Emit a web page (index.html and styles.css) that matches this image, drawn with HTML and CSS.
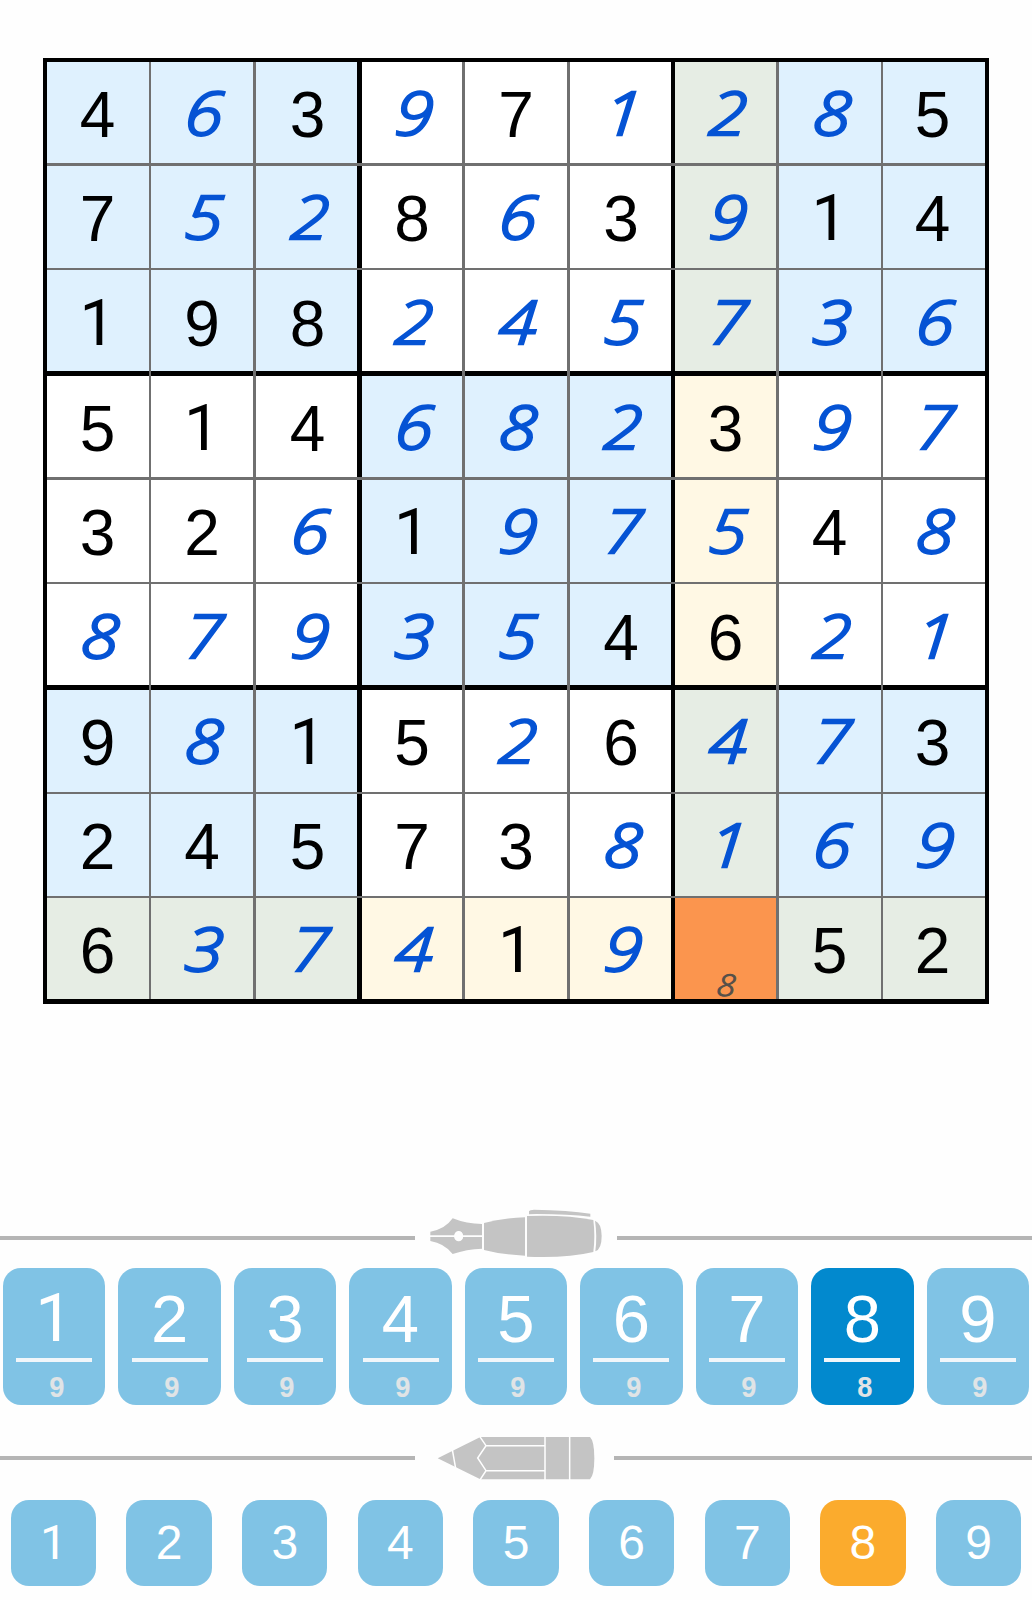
FILE: index.html
```
<!DOCTYPE html>
<html lang="en">
<head>
<meta charset="utf-8">
<title>Sudoku</title>
<link rel="stylesheet" href="styles.css">
</head>
<body>
<main class="game">
  <section class="board">
    <div class="cells">
      <b class="c box">4</b><i class="c box"><s>6</s></i><b class="c box">3</b><i class="c"><s>9</s></i><b class="c">7</b><i class="c"><s>1</s></i><i class="c peer"><s>2</s></i><i class="c box"><s>8</s></i><b class="c box">5</b>
      <b class="c box">7</b><i class="c box"><s>5</s></i><i class="c box"><s>2</s></i><b class="c">8</b><i class="c"><s>6</s></i><b class="c">3</b><i class="c peer"><s>9</s></i><b class="c one box">1</b><b class="c box">4</b>
      <b class="c one box">1</b><b class="c box">9</b><b class="c box">8</b><i class="c"><s>2</s></i><i class="c"><s>4</s></i><i class="c"><s>5</s></i><i class="c peer"><s>7</s></i><i class="c box"><s>3</s></i><i class="c box"><s>6</s></i>
      <b class="c">5</b><b class="c one">1</b><b class="c">4</b><i class="c box"><s>6</s></i><i class="c box"><s>8</s></i><i class="c box"><s>2</s></i><b class="c line-peer">3</b><i class="c"><s>9</s></i><i class="c"><s>7</s></i>
      <b class="c">3</b><b class="c">2</b><i class="c"><s>6</s></i><b class="c one box">1</b><i class="c box"><s>9</s></i><i class="c box"><s>7</s></i><i class="c line-peer"><s>5</s></i><b class="c">4</b><i class="c"><s>8</s></i>
      <i class="c"><s>8</s></i><i class="c"><s>7</s></i><i class="c"><s>9</s></i><i class="c box"><s>3</s></i><i class="c box"><s>5</s></i><b class="c box">4</b><b class="c line-peer">6</b><i class="c"><s>2</s></i><i class="c"><s>1</s></i>
      <b class="c box">9</b><i class="c box"><s>8</s></i><b class="c one box">1</b><b class="c">5</b><i class="c"><s>2</s></i><b class="c">6</b><i class="c peer"><s>4</s></i><i class="c box"><s>7</s></i><b class="c box">3</b>
      <b class="c box">2</b><b class="c box">4</b><b class="c box">5</b><b class="c">7</b><b class="c">3</b><i class="c"><s>8</s></i><i class="c peer"><s>1</s></i><i class="c box"><s>6</s></i><i class="c box"><s>9</s></i>
      <b class="c peer last">6</b><i class="c peer last"><s>3</s></i><i class="c peer last"><s>7</s></i><i class="c line-peer last"><s>4</s></i><b class="c one line-peer last">1</b><i class="c line-peer last"><s>9</s></i><i class="c selected"><s>8</s></i><b class="c peer last">5</b><b class="c peer last">2</b>
    </div>
    <div class="rules">
      <span class="v thick c3"></span><span class="v thick c6"></span>
      <span class="h thick r3"></span><span class="h thick r6"></span>
      <span class="v c1"></span><span class="v wide c2"></span><span class="v wide c4"></span><span class="v wide c5"></span><span class="v wide c7"></span><span class="v c8"></span>
      <span class="h wide r1"></span><span class="h r2"></span><span class="h wide r4"></span><span class="h r5"></span><span class="h r7"></span><span class="h r8"></span>
    </div>
  </section>

  <div class="divider pen-divider">
    <svg class="pen" viewBox="15 24 606 180" aria-hidden="true">
      <g fill="#c4c4c4">
        <path d="M61 95Q105 88 128 55Q170 72 216 72V106H159A13 13 0 0 0 133 106H61Z"/>
        <path d="M61 111H133A13 13 0 0 0 159 111H216V146Q170 147 128 162Q103 130 61 123Z"/>
        <path d="M222 69Q275 54 345 52V167Q275 164 222 150Z"/>
        <path d="M351 48Q470 44 550 60Q556 108 550 156Q470 175 351 170Z"/>
        <path d="M555 62Q575 70 575 108Q575 148 556 154Q562 108 555 62Z"/>
        <path d="M357 34Q359 29 372 29Q475 30 541 41V50Q475 42 380 42L357 43Z"/>
      </g>
      <circle cx="146" cy="108.500" r="13" fill="#fefefe"/>
    </svg>
  </div>
  <div class="digits">
    <div class="digit"><span class="one">1</span><small>9</small></div>
    <div class="digit"><span>2</span><small>9</small></div>
    <div class="digit"><span>3</span><small>9</small></div>
    <div class="digit"><span>4</span><small>9</small></div>
    <div class="digit"><span>5</span><small>9</small></div>
    <div class="digit"><span>6</span><small>9</small></div>
    <div class="digit"><span>7</span><small>9</small></div>
    <div class="digit active"><span>8</span><small>8</small></div>
    <div class="digit"><span>9</span><small>9</small></div>
  </div>

  <div class="divider pencil-divider">
    <svg class="pencil" viewBox="15 18 597 162" aria-hidden="true">
      <path fill="#c4c4c4" d="M83 100L211 36H540Q553 48 553 100Q553 150 540 163H211Z"/>
      <path fill="none" stroke="#fff" stroke-width="4.5" d="M127 74L137 130M209 34L228 62L203 99L228 137L209 166M228 62H404M228 137H404M405 34V165M479 34V165"/>
    </svg>
  </div>
  <div class="notes">
    <div class="note one">1</div><div class="note">2</div><div class="note">3</div><div class="note">4</div><div class="note">5</div><div class="note">6</div><div class="note">7</div><div class="note active">8</div><div class="note">9</div>
  </div>
</main>
</body>
</html>
```

FILE: styles.css
```
* { box-sizing: border-box; }
body {
  margin: 0;
  background: #fefefe;
  font-family: "Liberation Sans", Arial, sans-serif;
}
.game {
  width: 1032px;
  height: 1600px;
  padding-top: 58px;
  display: flex;
  flex-direction: column;
  overflow: hidden;
}

/* board: cells and ruling lines are two grids stacked in one area */
.board {
  display: grid;
  width: 946px;
  margin-left: 43px;
  border: 4px solid #000;
  border-bottom-width: 5px;
}
.cells, .rules {
  grid-area: 1 / 1;
  display: grid;
  grid-template-columns: 104px 105px 106px 103px 105px 105px 104px 104px 102px;
  grid-template-rows: 104px 104px 106px 104px 104px 106px 104px 104px 101px;
}
.c {
  display: flex;
  align-items: center;
  justify-content: center;
  padding: 2px 3px 0 0;
  font-size: 64px;
  line-height: 64px;
  font-weight: 400;
  font-style: normal;
  color: #000;
  background: #fff;
}
.c.last { padding-top: 5px; }
.c s {
  display: block;
  text-decoration: none;
  font-family: "Open Sans", "Noto Sans", sans-serif;
  font-style: italic;
  font-weight: 300;
  font-size: 60px;
  color: #0553d4;
  -webkit-text-stroke: 2.6px #0553d4;
  transform: translate(3px, -3px) skewX(-4deg) scaleX(1.14);
}
/* the plain stroke "1" has no foot */
.one { font-family: Roboto, "Liberation Sans", sans-serif; }
.box { background: #dff1fe; }
.peer { background: #e6ede4; }
.line-peer { background: #fff8e4; }
.selected { background: #fb954e; align-items: flex-end; }
.c.selected s {
  font-size: 30px;
  line-height: 30px;
  color: #555049;
  -webkit-text-stroke: 1px #555049;
  transform: translate(1px, 1px) skewX(-4deg) scaleX(1.14);
}
.rules span { background: #707070; }
.v { grid-row: 1 / -1; justify-self: end; width: 2px; }
.h { grid-column: 1 / -1; align-self: end; height: 2px; }
.v.wide { width: 3px; }
.h.wide { height: 3px; }
.rules .thick { background: #000; }
.v.thick { width: 5px; }
.v.thick.c6 { width: 4px; }
.h.thick { height: 5px; }
.c1 { grid-column: 1; } .c2 { grid-column: 2; } .c3 { grid-column: 3; }
.c4 { grid-column: 4; } .c5 { grid-column: 5; } .c6 { grid-column: 6; }
.c7 { grid-column: 7; } .c8 { grid-column: 8; }
.r1 { grid-row: 1; } .r2 { grid-row: 2; } .r3 { grid-row: 3; }
.r4 { grid-row: 4; } .r5 { grid-row: 5; } .r6 { grid-row: 6; }
.r7 { grid-row: 7; } .r8 { grid-row: 8; }

/* dividers with pen and pencil */
.divider { display: flex; align-items: center; }
.divider::before, .divider::after { content: ""; height: 4px; background: #b5b5b5; }
.divider::before { width: 415px; }
.divider::after { flex: 1; }
.pen-divider { margin-top: 204px; height: 60px; }
.pen { width: 202px; height: 60px; }
.pencil-divider { margin-top: 26px; height: 54px; }
.pencil { width: 199px; height: 54px; }

.digits {
  display: grid;
  grid-template-columns: repeat(9, 1fr);
  gap: 13.1px;
  height: 137px;
  padding: 0 2.9px;
}
.digit {
  display: flex;
  flex-direction: column;
  align-items: center;
  padding-top: 13px;
  border-radius: 18px;
  background: #80c3e5;
  color: #fff;
}
.digit span {
  width: 76px;
  height: 81px;
  border-bottom: 4px solid #f1f6fa;
  font-size: 67px;
  line-height: 75px;
  text-align: center;
}
.digit small {
  padding: 8px 0 0 5px;
  font-size: 29px;
  line-height: 34px;
  font-weight: 700;
  color: #e0e4e6;
  transform: scaleX(0.94);
}
.digit.active { background: #0289ce; }

.notes {
  display: grid;
  grid-template-columns: repeat(9, 1fr);
  gap: 30.2px;
  height: 85.5px;
  margin-top: 14.5px;
  padding: 0 10.8px;
}
.note {
  border-radius: 18px;
  background: #80c3e5;
  color: #fff;
  font-size: 48px;
  line-height: 86px;
  text-align: center;
}
.note.active { background: #fbab2d; }
```
